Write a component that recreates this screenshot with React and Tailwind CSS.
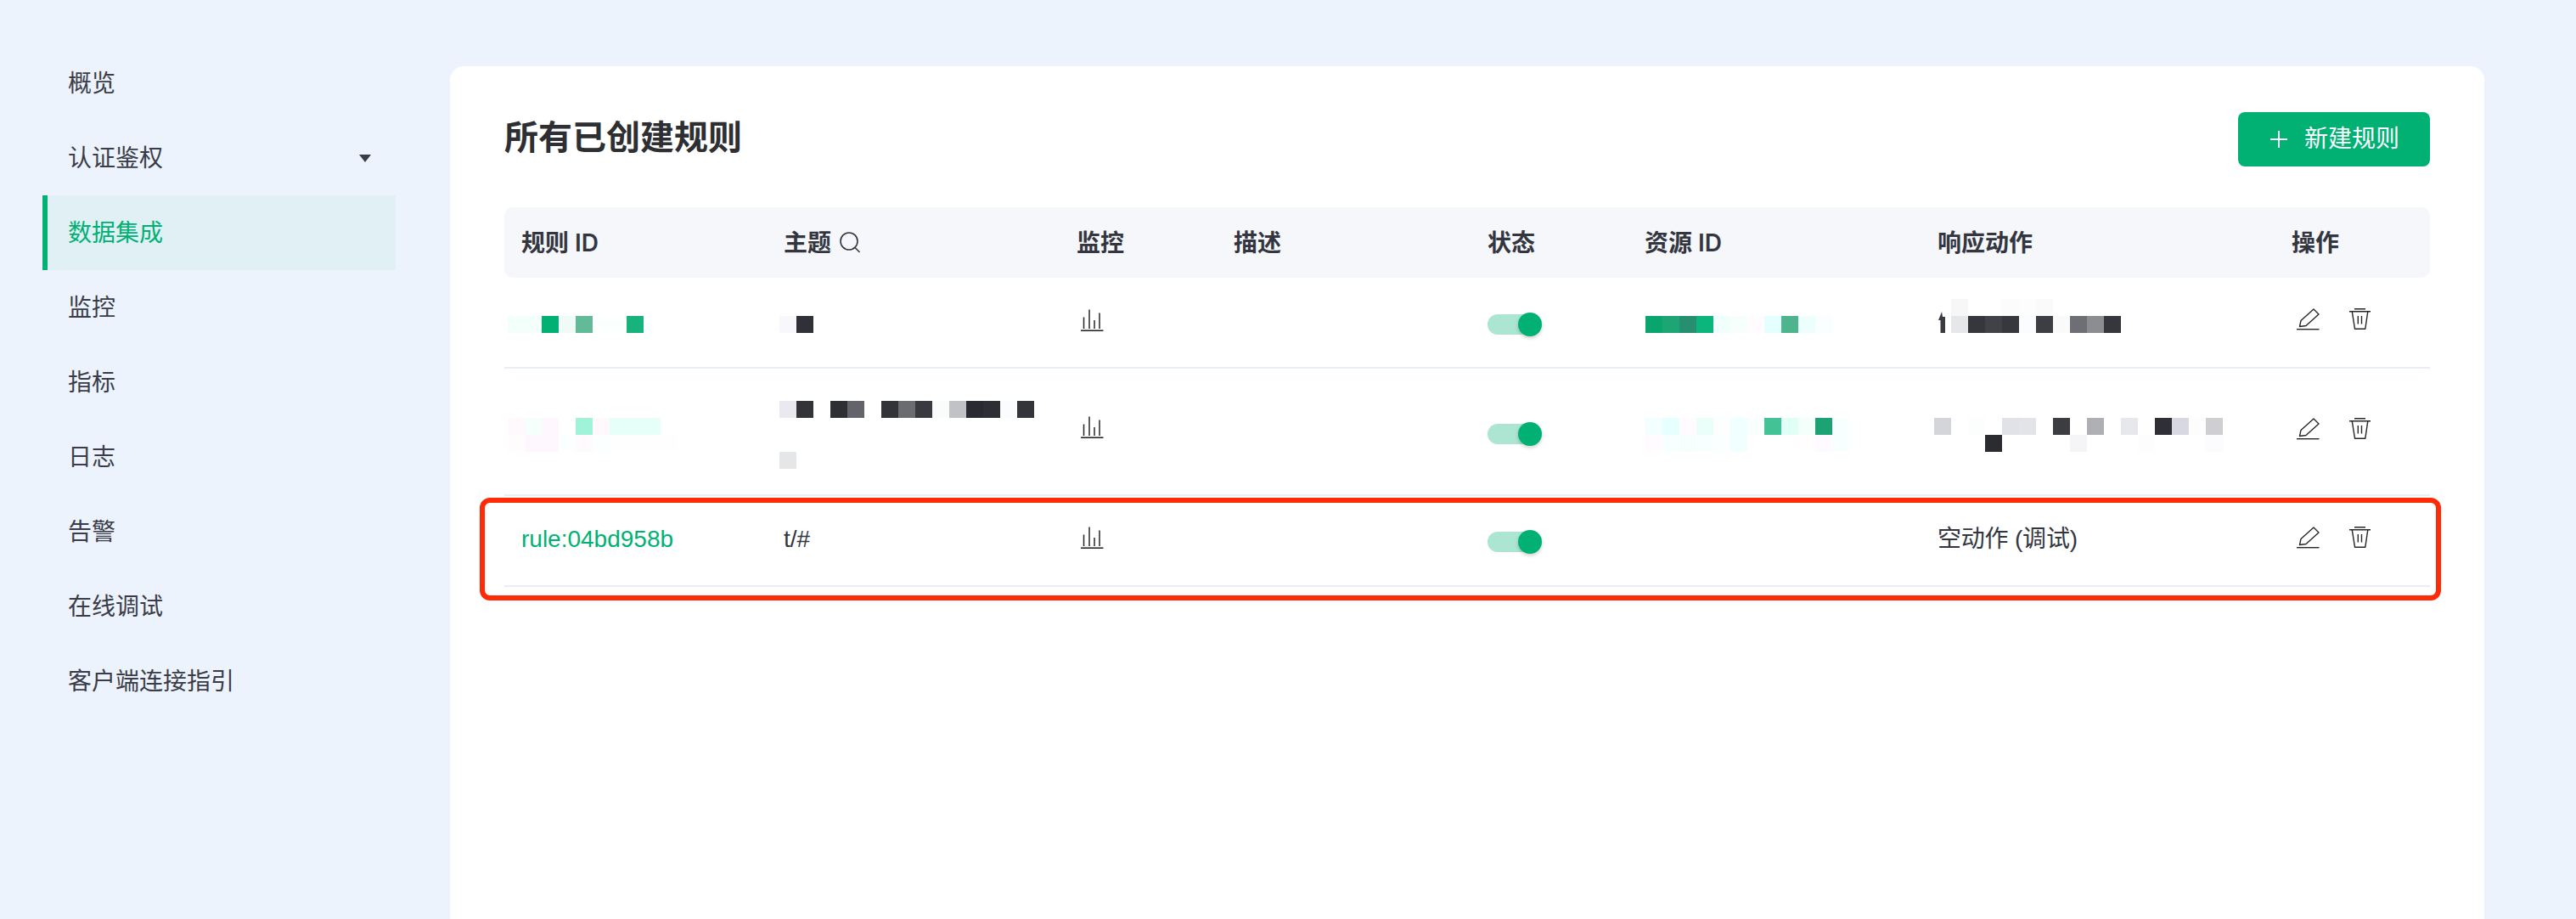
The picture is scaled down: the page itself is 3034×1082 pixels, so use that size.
import React from 'react';

const GRID = "grid grid-cols-[330px_344px_185px_299px_185px_346px_416px_163px] items-start";
const FONT = "font-['Liberation_Sans','Noto_Sans_CJK_SC',sans-serif]";
const HEAD_FONT = "font-['Inter','Noto_Sans_CJK_SC',sans-serif]";

const MENU = ["概览", "认证鉴权", "数据集成", "监控", "指标", "日志", "告警", "在线调试", "客户端连接指引"];

const W = "#ffffff";

// redacted values in the screenshot, one array per 20px line of cells
const R1_ID = [["#f2fffb", "#f2fffb", "#00b173", "#f0faf6", "#63ba98", "#fbfffe", "#fbfffe", "#18b37c"]];
const R1_TOPIC = [["#f8f8fc", "#2f3038"]];
const R1_RES = [["#0aa56f", "#1ea574", "#268f6f", "#0cb57c", "#f0fffc", "#f6fffb", "#fffbfe", "#e4ffff", "#4db48d", "#ecfffc", "#f9ffff"]];
const R1_ACTION = [
  [W, "#f7f7f7", W, W, "#fcfcfc", "#fdfdfd", "#fafafa"],
  [W, "#e6e7e9", "#36373c", "#414247", "#37383d", "#fafcff", "#3d3e43", "#fafafa", "#6e6f74", "#8c8d91", "#36373c"],
];
const R2_ID = [
  ["#fff8fd", "#f5fffb", "#fff7fe", W, "#a0f3d8", "#fff9fe", "#e6fff9", "#e6fff9", "#e6fff9"],
  ["#fffcfe", "#fff7fe", "#fff7fe", "#fbffff", "#fffafe", "#fcffff", "#fffeff", "#fffeff", "#fffeff", "#fffeff"],
];
const R2_TOPIC = [
  ["#e9e9ef", "#333438", W, "#2e2f33", "#63636c", W, "#333438", "#6b6c70", "#393a40", "#fafbfb", "#c1c2c6", "#2a2a33", "#2e2f34", "#fbfcfe", "#34353a"],
  [],
  [],
  ["#e5e6e8"],
];
const R2_RES = [
  ["#f3ffff", "#e6ffff", "#fffbfe", "#eafffa", "#fdfefe", "#f0ffff", "#f9fffd", "#43c296", "#e0fff7", "#f4fffc", "#1ca273", "#f8ffff"],
  ["#fffbff", "#f8ffff", "#f6fffd", "#f8ffff", "#fbffff", "#f2ffff", W, W, W, "#fffdfe", "#fffaff", "#f7ffff"],
];
const R2_ACTION = [
  ["#d4d5db", W, "#fcfdfd", W, "#e1e2e7", "#e3e4e8", W, "#3c3d41", W, "#afb0b4", W, "#e7e8ec", W, "#2f3036", "#d8d8e2", "#fdfdfe", "#cfced3"],
  [W, W, W, "#2b2c2f", W, W, W, W, "#f5f5f7", W, W, W, "#fdfdfd", W, W, W, "#fcfcfe"],
];

const Mosaic = ({ lines, className = "" }) => (
  <div className={`flex flex-col ${className}`}>
    {lines.map((cells, i) => (
      <div key={i} className="flex h-[20px]">
        {cells.map((c, j) => (
          <div key={j} className="w-[20px] h-[20px]" style={{ backgroundColor: c }} />
        ))}
      </div>
    ))}
  </div>
);

const BarsIcon = ({ className = "" }) => (
  <svg className={className} width="27" height="27" viewBox="0 0 27 27" fill="none" stroke="#26272b">
    <path d="M3.5 9.5V23M10 0.5V23M16 13V23M22 4.5V23" strokeWidth="1.5" />
    <path d="M0 25.2H26.5" strokeWidth="1.6" />
  </svg>
);

const PenIcon = () => (
  <svg width="27" height="26" viewBox="0 0 27 26" fill="none" stroke="#26272b" strokeWidth="1.4">
    <path d="M3.5 21.5L5 14.5L20 1L26 7L11 20.5Z" strokeLinejoin="round" />
    <path d="M0 24.7H26.5" />
  </svg>
);

const TrashIcon = () => (
  <svg width="25" height="26" viewBox="0 0 25 26" fill="none" stroke="#26272b" strokeWidth="1.4">
    <path d="M6 0.8H19M0 3.8H25" />
    <path d="M3.3 3.8L6.5 24.2H18.8L21.8 3.8" strokeLinejoin="round" />
    <path d="M10.3 9V18.5M14.5 9V18.5" />
  </svg>
);

const SearchIcon = () => (
  <svg width="25" height="25" viewBox="0 0 25 25" fill="none" stroke="#33363f" strokeWidth="1.6">
    <circle cx="11" cy="11" r="10" />
    <path d="M18 18.5L23.5 24" />
  </svg>
);

const Toggle = ({ className = "" }) => (
  <div className={`relative w-[64px] h-[28px] ${className}`}>
    <div className="absolute left-0 top-[2px] w-[60px] h-[24px] rounded-full bg-[#ace5d1]" />
    <div className="absolute right-0 top-0 w-[28px] h-[28px] rounded-full bg-[#00b173] shadow-[0_2px_4px_rgba(0,0,0,0.2)]" />
  </div>
);

const Actions = ({ className = "" }) => (
  <div className={`flex gap-[35px] ml-[6px] ${className}`}>
    <PenIcon />
    <TrashIcon />
  </div>
);

const App = () => {
  return (
    <div className={`flex h-[1082px] overflow-hidden bg-[#edf3fc] text-[28px] text-[#33363f] ${FONT}`}>
      <aside className="w-[530px] shrink-0 pl-[50px] pr-[64px] pt-[54px]">
        {MENU.map((item) => {
          const active = item === "数据集成";
          return (
            <div
              key={item}
              className={`flex items-center justify-between h-[88px] border-l-[6px] pl-[24px] pr-[29px] ${active ? "border-[#00b173] bg-[#e0f0f5] text-[#00b173]" : "border-transparent text-[#3a3d49]"}`}
            >
              <span className="pt-[2px]">{item}</span>
              {item === "认证鉴权" && (
                <span className="w-0 h-0 border-x-[7px] border-x-transparent border-t-[9px] border-t-[#3a3d49]" />
              )}
            </div>
          );
        })}
      </aside>

      <main className="flex-1 pt-[78px] pr-[108px]">
        <div className="h-full rounded-t-[16px] bg-white px-[64px] pt-[54px]">
          <div className="flex items-center justify-between mb-[48px]">
            <h1 className="text-[40px] leading-[60px] font-semibold text-[#2e2f33] -mt-[4px]">所有已创建规则</h1>
            <button className="flex items-center gap-[20px] h-[64px] w-[226px] pl-[38px] rounded-[8px] bg-[#00b173] text-white">
              <svg width="20" height="20" viewBox="0 0 20 20" stroke="#ffffff" strokeWidth="2">
                <path d="M10 0V20M0 10H20" />
              </svg>
              <span>新建规则</span>
            </button>
          </div>

          <div className="relative">
            <div className={`${GRID} !items-center h-[83px] rounded-[10px] bg-[#f5f7fb] font-semibold ${HEAD_FONT}`}>
              <div className="pl-[20px]">规则 ID</div>
              <div className="flex items-center gap-[10px] -ml-[1px]">主题 <SearchIcon /></div>
              <div>监控</div>
              <div>描述</div>
              <div>状态</div>
              <div>资源 ID</div>
              <div className="-ml-[1px]">响应动作</div>
              <div>操作</div>
            </div>

            <div className={`${GRID} h-[107px] border-b-2 border-[#e9edf4]`}>
              <Mosaic lines={R1_ID} className="mt-[45px] ml-[4px]" />
              <Mosaic lines={R1_TOPIC} className="mt-[45px] -ml-[6px]" />
              <BarsIcon className="mt-[37px] ml-[5px]" />
              <div />
              <Toggle className="mt-[41px]" />
              <Mosaic lines={R1_RES} className="mt-[45px] ml-[1px]" />
              <div className="relative mt-[25px] -ml-[5px]">
                <Mosaic lines={R1_ACTION} />
                <svg className="absolute left-[4px] top-[15px]" width="9" height="25" viewBox="0 0 9 25">
                  <path d="M5 0L1 10H3.5V25H9V6H6Z" fill="#3a3c44" />
                </svg>
              </div>
              <Actions className="mt-[36px]" />
            </div>

            <div className={`${GRID} h-[150px] border-b-2 border-[#e9edf4]`}>
              <Mosaic lines={R2_ID} className="mt-[58px] ml-[4px]" />
              <Mosaic lines={R2_TOPIC} className="mt-[38px] -ml-[6px]" />
              <BarsIcon className="mt-[56px] ml-[5px]" />
              <div />
              <Toggle className="mt-[63px]" />
              <Mosaic lines={R2_RES} className="mt-[58px] ml-[1px]" />
              <Mosaic lines={R2_ACTION} className="mt-[58px] -ml-[5px]" />
              <Actions className="mt-[58px]" />
            </div>

            <div className={`${GRID} h-[107px] border-b-2 border-[#e9edf4]`}>
              <div className="pl-[20px] mt-[31px] leading-[40px] text-[#00b173]">rule:04bd958b</div>
              <div className="mt-[31px] -ml-[1px] leading-[40px]">t/#</div>
              <BarsIcon className="mt-[36px] ml-[5px]" />
              <div />
              <Toggle className="mt-[40px]" />
              <div />
              <div className="mt-[31px] -ml-[1px] leading-[40px] tracking-[-0.2px]">空动作 (调试)</div>
              <Actions className="mt-[36px]" />
            </div>

            <div className="absolute -left-[29px] top-[342px] w-[2310px] h-[121px] rounded-[12px] border-[6px] border-[#ff2a06]" />
          </div>
        </div>
      </main>
    </div>
  );
};

export default App;
